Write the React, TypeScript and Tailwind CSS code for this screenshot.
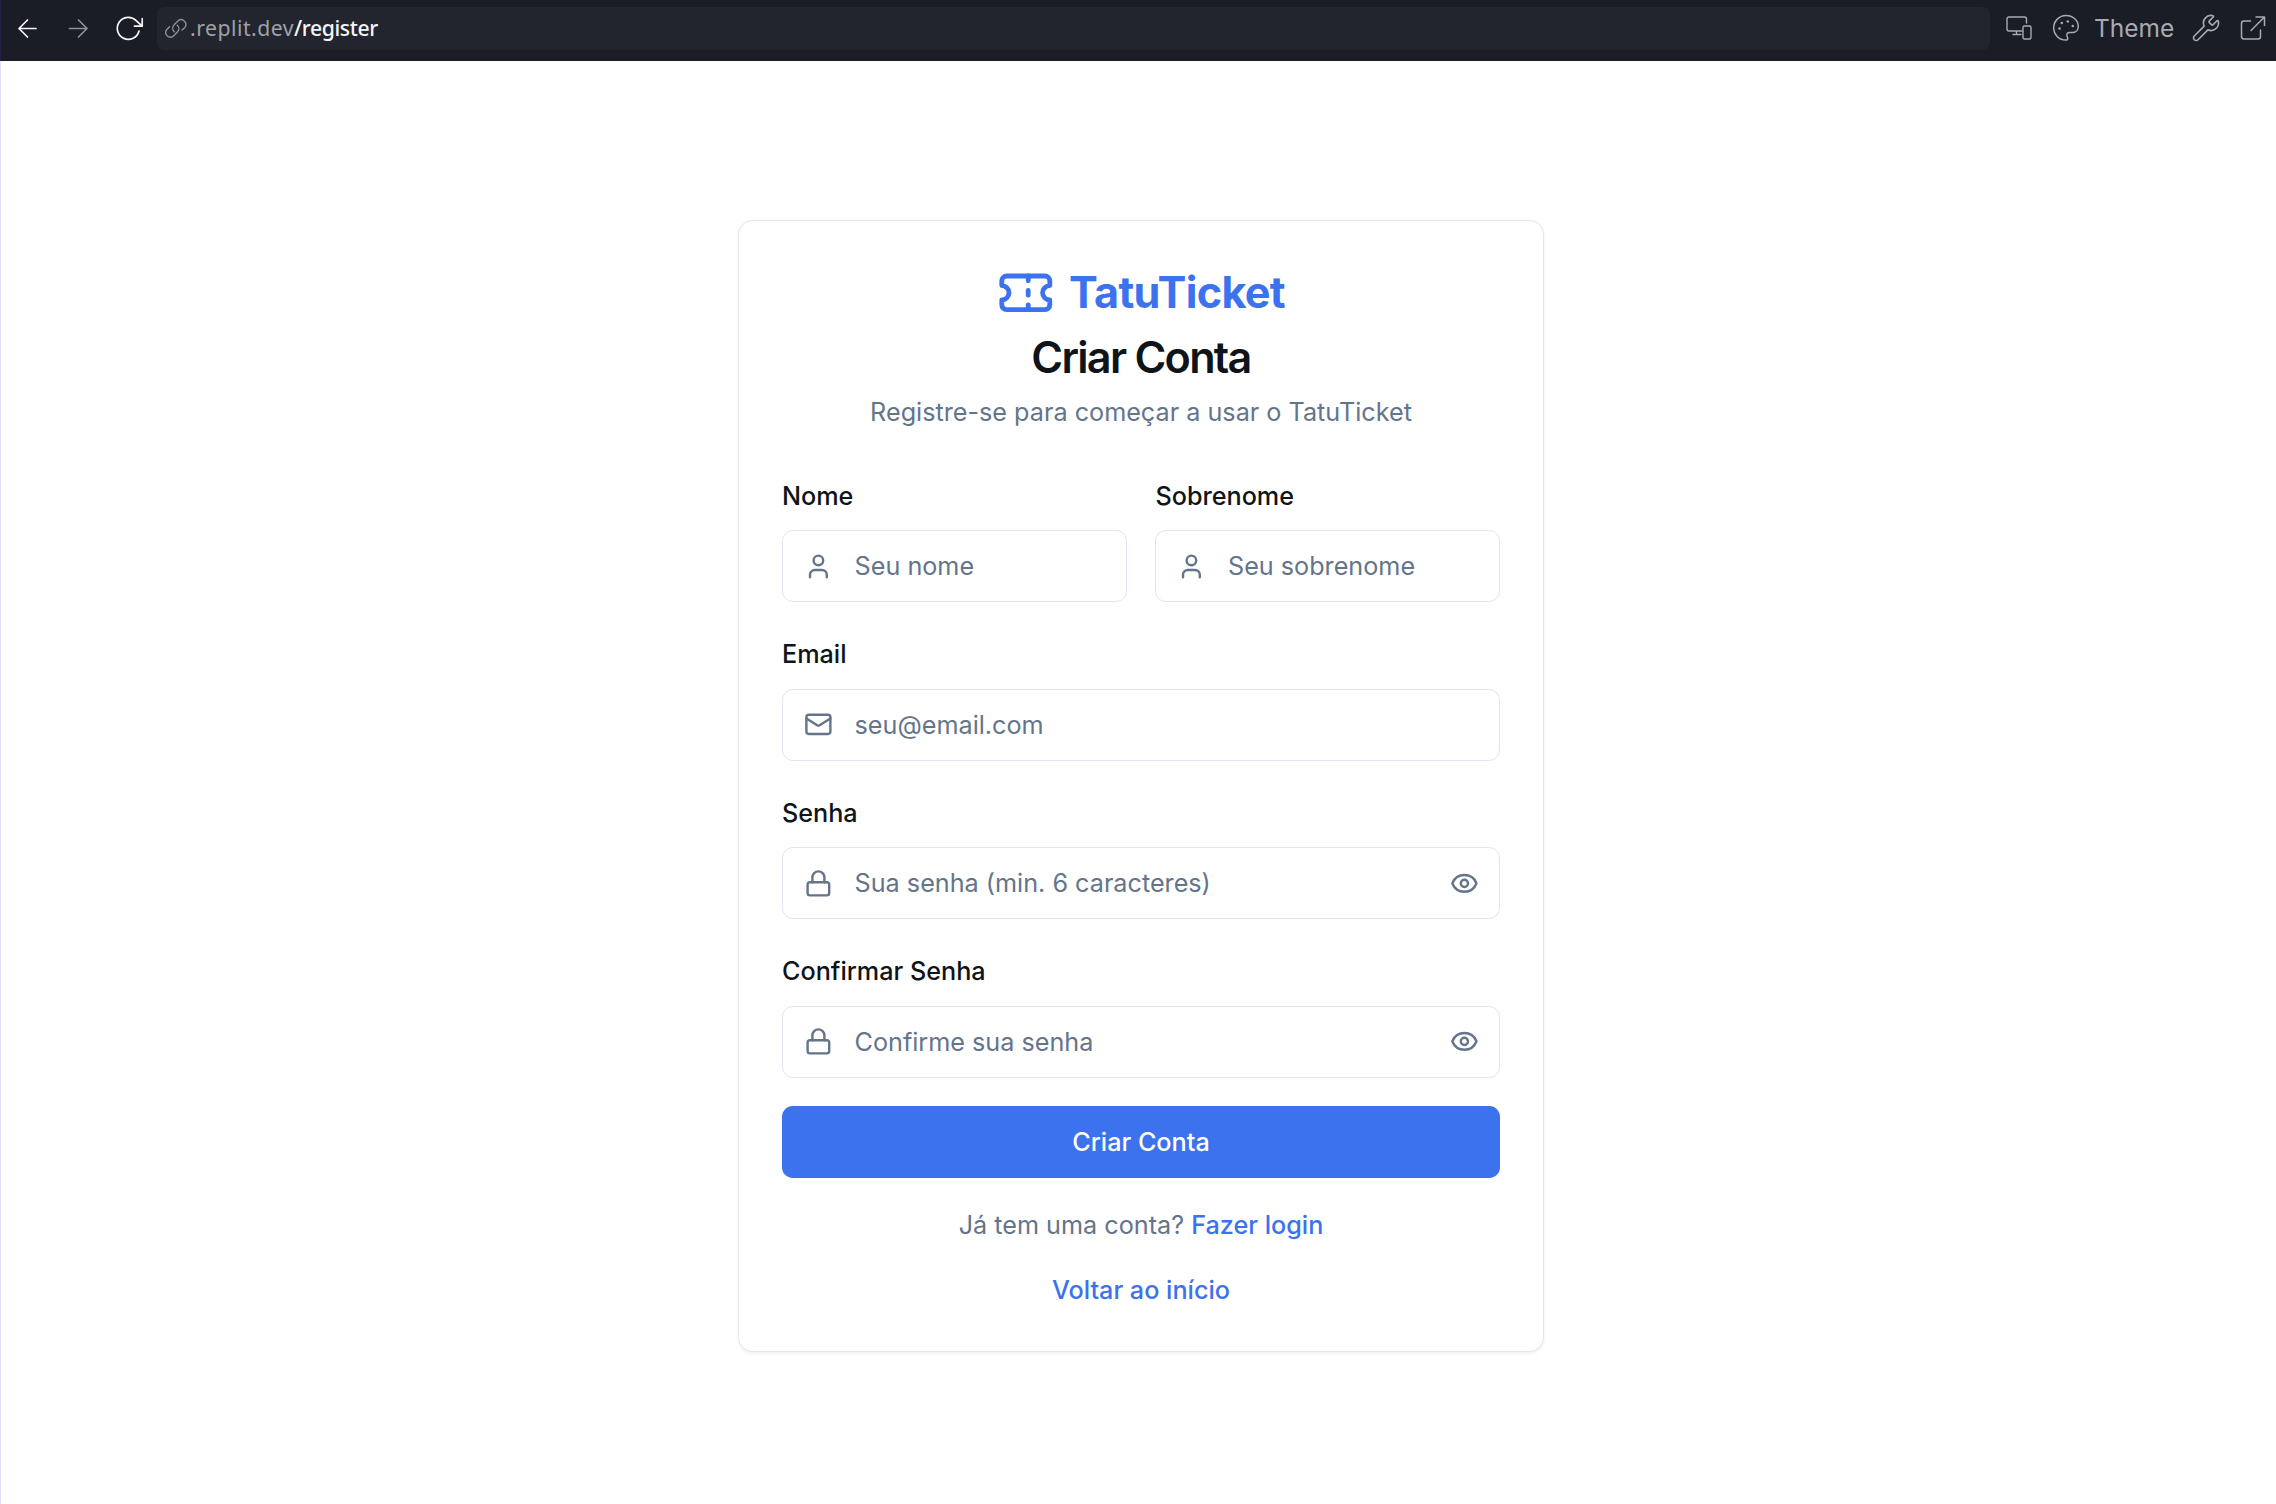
import React from "react";
import { Eye, Lock, Mail, Ticket, User, Wrench } from "lucide-react";

type IconType = React.ComponentType<{ className?: string; size?: number | string; strokeWidth?: number | string }>;

function Svg({ w, className = "", children }: { w: number; className?: string; children: React.ReactNode }) {
  return (
    <svg
      width={w}
      height={30}
      viewBox={`0 -0.5 ${w} 30`}
      fill="none"
      stroke="currentColor"
      strokeWidth={1.7}
      strokeLinecap="round"
      strokeLinejoin="round"
      className={`-mt-px shrink-0 ${className}`}
    >
      {children}
    </svg>
  );
}

function Toolbar() {
  return (
    <header className="-ml-px flex h-[61px] w-[2276px] items-center border-l border-[#241f45] bg-[#1a1d25] pb-1 text-[#a8aab1]">
      <Svg w={20} className="ml-[16px] text-[#f5f5f7]">
        <path d="M19 15H2M10.500 6.500 2 15l8.500 8.500" />
      </Svg>
      <Svg w={20} className="ml-[31px] text-[#8d9098]">
        <path d="M1.500 15h17.500M10.500 6.500 19 15l-8.500 8.500" />
      </Svg>
      <Svg w={30} className="ml-[26px] text-[#f5f5f7]">
        <path d="M25 17.500A11 11 0 1 1 22.200 7.200L28 12.500M28.200 5v7.700h-7.700" />
      </Svg>
      <div className="ml-[13px] flex h-[43px] w-[1833px] items-center rounded-[7px] bg-[#22252e] pl-[8px]">
        <Svg w={22} className="text-[#8d9098]">
          <g strokeWidth={1.4}>
            <path d="M9.300 18.200a4.700 4.700 0 0 1-.4-6.600l4.300-4.300a4.700 4.700 0 0 1 6.600 6.600l-2.700 2.700" />
            <path d="M12.300 11.700a4.700 4.700 0 0 1 .4 6.600l-4.300 4.300a4.700 4.700 0 0 1-6.600-6.600l2.700-2.700" />
          </g>
        </Svg>
        <span className="-mt-px ml-[3px] whitespace-nowrap font-['Noto_Sans'] text-[21.2px] leading-[30px] tracking-[0.5px] text-[#9fa1a9]">
          .replit.dev<span className="font-medium tracking-[-0.4px] text-[#f5f5f7]">/register</span>
        </span>
      </div>
      <Svg w={28} className="ml-[15px]">
        <g strokeWidth={1.4}>
          <path d="M17 17.500H4a2 2 0 0 1-2-2V5.500a2 2 0 0 1 2-2h15.500a2 2 0 0 1 2 2V9.500M11.500 17.500V21M8 21h8" />
          <rect x="18" y="12.500" width="8" height="13" rx="1.500" />
        </g>
      </Svg>
      <Svg w={28} className="ml-[19px]">
        <g strokeWidth={1.5}>
          <path d="M14 26.600C7 26.600 1.700 21 1.700 14.300S7.200 2 14 2s12.300 5 12.300 11c0 3.600-2.800 6-6.300 6h-2.500c-1.800 0-3 1.200-2.600 3l.8 2.600c.3 1-.4 2-1.700 2Z" />
        </g>
        <g fill="currentColor" stroke="none">
          <circle cx="7.500" cy="15" r="1.300" />
          <circle cx="9.800" cy="9.500" r="1.300" />
          <circle cx="15.800" cy="8" r="1.300" />
          <circle cx="20.800" cy="12.500" r="1.300" />
        </g>
      </Svg>
      <span className="-mt-px ml-[14px] w-[79px] whitespace-nowrap text-[24.5px] leading-[30px]">Theme</span>
      <Wrench className="-mt-px ml-[18px] shrink-0" size={30} strokeWidth={1.3} />
      <Svg w={28} className="ml-[18px]">
        <g strokeWidth={1.5}>
          <path d="M11.500 7.500H5a2.500 2.500 0 0 0-2.500 2.500v13A2.500 2.500 0 0 0 5 25.500h14a2.500 2.500 0 0 0 2.500-2.500v-6.500M12 17 25 4M17 3.500h8.500V12" />
        </g>
      </Svg>
    </header>
  );
}

function Field({
  label,
  placeholder,
  icon: Icon,
  reveal = false,
  type = "text",
}: {
  label: string;
  placeholder: string;
  icon: IconType;
  reveal?: boolean;
  type?: string;
}) {
  return (
    <div className="flex min-w-0 flex-1 flex-col gap-[12.4px]">
      <label className="pt-[2px] text-[25.2px] leading-[43.2px] font-medium text-[#0f1419]">{label}</label>
      <div className="flex h-[72px] items-center rounded-[10.8px] border border-[#e2e4f0] bg-white px-[20.6px] text-[#64748b]">
        <Icon className="shrink-0" size={28.8} strokeWidth={2} />
        <input
          type={type}
          placeholder={placeholder}
          className="ml-[22.2px] min-w-0 flex-1 bg-transparent text-[25.2px] leading-[36px] placeholder:text-[#64748b] placeholder:opacity-100 outline-none"
        />
        {reveal && (
          <button type="button" aria-label="Mostrar senha">
            <Eye size={28.8} strokeWidth={2} />
          </button>
        )}
      </div>
    </div>
  );
}

export default function App() {
  return (
    <div className="flex h-[1504px] w-[2276px] flex-col border-l border-[#e3e0fa] bg-white font-['Inter',sans-serif]">
      <Toolbar />
      <main className="flex justify-center pt-[158.8px] pl-[5px]">
        <section className="flex w-[806.4px] flex-col rounded-[14.4px] border border-[#e2e4f0] bg-white p-[43.2px] shadow-[0_1.8px_3.6px_rgba(0,0,0,0.05)]">
          <div className="flex flex-col gap-[7.2px] text-center">
            <div className="flex items-center justify-center gap-[14.4px] text-[#3c72ee]">
              <Ticket size={57.6} strokeWidth={2} />
              <span className="text-[43.2px] leading-[57.6px] font-bold tracking-[-0.016em]">TatuTicket</span>
            </div>
            <h1 className="text-[43.2px] leading-[57.6px] font-semibold tracking-[-0.04em] text-[#0f1419]">Criar Conta</h1>
            <p className="text-[25.2px] leading-[36px] text-[#64748b]">Registre-se para começar a usar o TatuTicket</p>
          </div>
          <form className="mt-[43.2px] flex flex-col gap-[28.8px]">
            <div className="flex gap-[28.8px]">
              <Field label="Nome" placeholder="Seu nome" icon={User} />
              <Field label="Sobrenome" placeholder="Seu sobrenome" icon={User} />
            </div>
            <Field label="Email" placeholder="seu@email.com" icon={Mail} type="email" />
            <Field label="Senha" placeholder="Sua senha (min. 6 caracteres)" icon={Lock} type="password" reveal />
            <Field label="Confirmar Senha" placeholder="Confirme sua senha" icon={Lock} type="password" reveal />
            <button type="button" className="h-[72px] rounded-[10.8px] bg-[#3c72ee] text-[25.2px] leading-[36px] font-medium text-white">
              Criar Conta
            </button>
          </form>
          <p className="mt-[28.8px] text-center text-[25.2px] leading-[36px] text-[#64748b]">
            Já tem uma conta? <a className="font-medium text-[#3c72ee]">Fazer login</a>
          </p>
          <a className="mt-[28.8px] text-center text-[25.2px] leading-[36px] font-medium text-[#3c72ee]">Voltar ao início</a>
        </section>
      </main>
    </div>
  );
}
